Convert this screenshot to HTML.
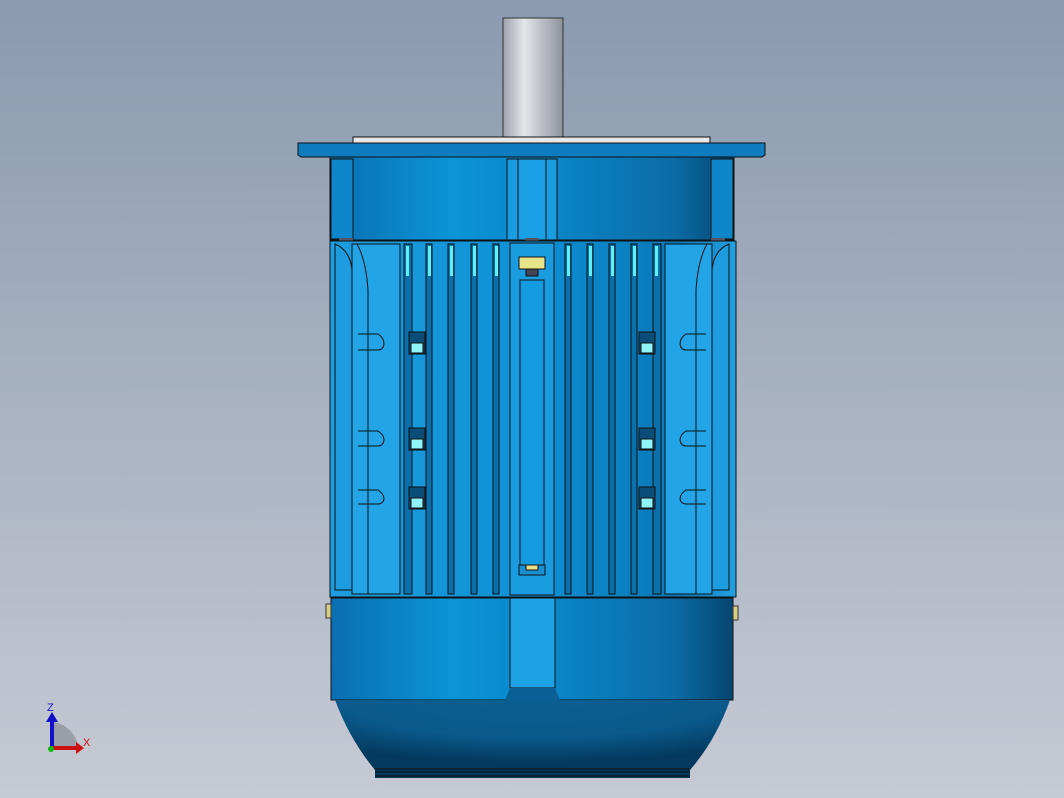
<!DOCTYPE html>
<html><head><style>
html,body{margin:0;padding:0;width:1064px;height:798px;overflow:hidden}
body{background:linear-gradient(#8a9ab0,#c6cad4);font-family:"Liberation Sans",sans-serif}
svg{position:absolute;left:0;top:0}
</style></head><body>
<svg width="1064" height="798" viewBox="0 0 1064 798">
<defs>
<linearGradient id="shaft" x1="0" x2="1"><stop offset="0" stop-color="#9ea3ab"/><stop offset="0.35" stop-color="#e4e6ea"/><stop offset="1" stop-color="#8d929a"/></linearGradient>
<linearGradient id="hous" x1="0" x2="1"><stop offset="0" stop-color="#0a6fb0"/><stop offset="0.3" stop-color="#0b94d8"/><stop offset="0.55" stop-color="#0a86c8"/><stop offset="0.85" stop-color="#0b6ca6"/><stop offset="1" stop-color="#05466f"/></linearGradient>
<linearGradient id="fins" x1="0" x2="1"><stop offset="0" stop-color="#1e9ee0"/><stop offset="0.5" stop-color="#0d90d4"/><stop offset="0.85" stop-color="#0a78b8"/><stop offset="1" stop-color="#22a0e0"/></linearGradient>
<radialGradient id="dome" cx="0.5" cy="0" r="0.8"><stop offset="0" stop-color="#0b5e90"/><stop offset="0.6" stop-color="#0a5a8c"/><stop offset="1" stop-color="#03395e"/></radialGradient>
</defs>
<!-- shaft -->
<rect x="503" y="18" width="60" height="122" fill="url(#shaft)" stroke="#333" stroke-width="1"/>
<!-- plate -->
<rect x="353" y="137" width="357" height="7" fill="#e8e8ea" stroke="#111"/>
<!-- flange -->
<path d="M298 143 H765 V155 L762 157 H301 L298 155Z" fill="#0f7cc0" stroke="#111"/>
<!-- upper housing -->
<rect x="330" y="157" width="404" height="83" fill="url(#hous)" stroke="#111"/>
<rect x="331" y="159" width="22" height="80" fill="#0f86cc" stroke="#111"/>
<rect x="711" y="159" width="22" height="80" fill="#0f86cc" stroke="#111"/>
<rect x="507" y="159" width="50" height="81" fill="#1a9ce0" stroke="#111"/>
<rect x="518" y="159" width="28" height="81" fill="#1aa0e6" stroke="#111"/>
<rect x="339" y="238" width="14" height="6" fill="#556" />
<rect x="525" y="238" width="14" height="6" fill="#556" />
<rect x="711" y="238" width="14" height="6" fill="#556" />
<!-- fin section -->
<rect x="330" y="241" width="406" height="356" fill="url(#fins)" stroke="#111"/>
<path d="M335 244 Q350 250 352 270 V590 H335Z" fill="#1d9ce0" stroke="#111"/>
<path d="M352 244 H400 V594 H352Z" fill="#22a4e6" stroke="#111"/>
<path d="M357 244 Q366 260 368 290 V594" fill="none" stroke="#111"/>
<path d="M729 244 Q714 250 712 270 V590 H729Z" fill="#1d9ce0" stroke="#111"/>
<path d="M665 244 H712 V594 H665Z" fill="#22a4e6" stroke="#111"/>
<path d="M707 244 Q698 260 696 290 V594" fill="none" stroke="#111"/>
<!-- bumps -->
<g fill="none" stroke="#111" stroke-width="1">
<path d="M358 334 H378 Q384 338 384 344 Q383 350 378 350 H358"/>
<path d="M358 431 H378 Q384 435 384 440 Q383 446 378 446 H358"/>
<path d="M358 490 H378 Q384 494 384 499 Q383 504 378 504 H358"/>
<path d="M706 334 H686 Q680 338 680 344 Q681 350 686 350 H706"/>
<path d="M706 431 H686 Q680 435 680 440 Q681 446 686 446 H706"/>
<path d="M706 490 H686 Q680 494 680 499 Q681 504 686 504 H706"/>
</g>
<!-- fin slots -->
<g stroke="#111" stroke-width="1">
<rect x="404" y="244" width="8" height="350" fill="#0a70ac"/>
<rect x="426" y="244" width="6" height="350" fill="#0a70ac"/>
<rect x="448" y="244" width="6" height="350" fill="#0a70ac"/>
<rect x="471" y="244" width="6" height="350" fill="#0a70ac"/>
<rect x="493" y="244" width="6" height="350" fill="#0a70ac"/>
<rect x="565" y="244" width="6" height="350" fill="#0a70ac"/>
<rect x="587" y="244" width="6" height="350" fill="#0a70ac"/>
<rect x="609" y="244" width="6" height="350" fill="#0a70ac"/>
<rect x="631" y="244" width="6" height="350" fill="#0a70ac"/>
<rect x="653" y="244" width="8" height="350" fill="#0a70ac"/>
</g>
<g fill="#5ff0f4">
<rect x="406" y="246" width="3" height="30"/><rect x="428" y="246" width="3" height="30"/><rect x="450" y="246" width="3" height="30"/><rect x="473" y="246" width="3" height="30"/><rect x="495" y="246" width="3" height="30"/>
<rect x="567" y="246" width="3" height="30"/><rect x="589" y="246" width="3" height="30"/><rect x="611" y="246" width="3" height="30"/><rect x="633" y="246" width="3" height="30"/><rect x="655" y="246" width="3" height="30"/>
</g>
<!-- center strip -->
<rect x="510" y="243" width="44" height="352" fill="#1a9ce0" stroke="#111"/>
<rect x="520" y="280" width="24" height="290" fill="#139ae0" stroke="#111"/>
<rect x="519" y="257" width="26" height="12" fill="#e8e48a" stroke="#111"/>
<rect x="526" y="269" width="12" height="7" fill="#445" stroke="#111"/>
<rect x="519" y="565" width="26" height="10" fill="#1a8ed0" stroke="#111"/>
<rect x="526" y="565" width="12" height="5" fill="#eee08a" stroke="#111"/>
<!-- bolts -->
<g stroke="#111" stroke-width="1">
<rect x="409" y="332" width="16" height="22" fill="#0a4d78"/><rect x="411" y="343" width="12" height="10" fill="#8ff4f6"/>
<rect x="409" y="428" width="16" height="22" fill="#0a4d78"/><rect x="411" y="439" width="12" height="10" fill="#8ff4f6"/>
<rect x="409" y="487" width="16" height="22" fill="#0a4d78"/><rect x="411" y="498" width="12" height="10" fill="#8ff4f6"/>
<rect x="639" y="332" width="16" height="22" fill="#0a4d78"/><rect x="641" y="343" width="12" height="10" fill="#8ff4f6"/>
<rect x="639" y="428" width="16" height="22" fill="#0a4d78"/><rect x="641" y="439" width="12" height="10" fill="#8ff4f6"/>
<rect x="639" y="487" width="16" height="22" fill="#0a4d78"/><rect x="641" y="498" width="12" height="10" fill="#8ff4f6"/>
</g>
<!-- fan cover -->
<rect x="331" y="598" width="402" height="102" fill="url(#hous)" stroke="#111"/>
<path d="M510 598 H555 V688 H510Z" fill="#1ea2e6" stroke="#111"/>
<rect x="326" y="604" width="5" height="14" fill="#d8cf80" stroke="#333"/>
<rect x="733" y="606" width="5" height="14" fill="#d8cf80" stroke="#333"/>
<!-- dome -->
<path d="M335 700 H730 Q716 740 690 770 V778 H375 V770 Q350 740 335 700Z" fill="url(#dome)"/>
<path d="M375 769 H690 M375 772 H690 M375 776 H690" stroke="#111" stroke-width="1"/>
<path d="M510 688 H555 L560 700 H505Z" fill="#0a5f94"/>
<!-- triad -->
<path d="M52 748 L52 722 A28 28 0 0 1 78 748Z" fill="#9a9ea6"/>
<rect x="50" y="722" width="4" height="28" fill="#1111cc"/>
<path d="M46 722 L52 712 L58 722Z" fill="#1111cc"/>
<rect x="50" y="746" width="26" height="4" fill="#cc1111"/>
<path d="M76 742 L84 748 L76 754Z" fill="#cc1111"/>
<circle cx="51" cy="749" r="3" fill="#11bb11"/>
<text x="47" y="711" font-size="11" fill="#1111cc">Z</text>
<text x="83" y="746" font-size="11" fill="#cc1111">X</text>
</svg>
</body></html>
